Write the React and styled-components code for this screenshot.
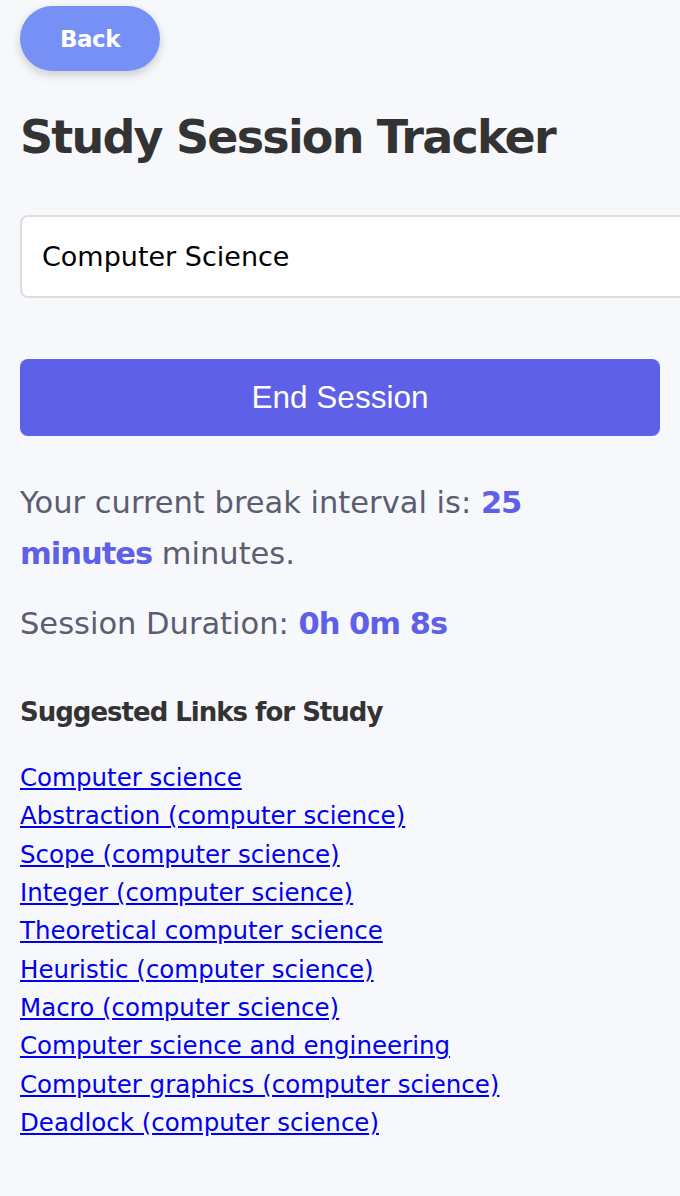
import React from "react"
import styled, { createGlobalStyle } from "styled-components"

const links = [
  "Computer science",
  "Abstraction (computer science)",
  "Scope (computer science)",
  "Integer (computer science)",
  "Theoretical computer science",
  "Heuristic (computer science)",
  "Macro (computer science)",
  "Computer science and engineering",
  "Computer graphics (computer science)",
  "Deadlock (computer science)",
]

const FONT = `"DejaVu Sans", "Open Sans", sans-serif`

const GlobalStyle = createGlobalStyle`
  html, body {
    margin: 0;
    padding: 0;
    background: #f7f8fc;
    overflow-x: hidden;
    font-family: ${FONT};
  }
`

export default function App() {
  return (
    <Page>
      <GlobalStyle />
      <BackButton>Back</BackButton>
      <Title>Study Session Tracker</Title>
      <SubjectInput defaultValue="Computer Science" />
      <EndButton>End Session</EndButton>
      <Info>
        Your current break interval is: <Strong>25 minutes</Strong> minutes.
      </Info>
      <Info $tight>
        Session Duration: <Strong>0h 0m 8s</Strong>
      </Info>
      <SectionTitle>Suggested Links for Study</SectionTitle>
      <LinkList>
        {links.map((l) => (
          <LinkItem key={l}>
            <StudyLink href="#">{l}</StudyLink>
          </LinkItem>
        ))}
      </LinkList>
    </Page>
  )
}

const Page = styled.div`
  width: 640px;
  padding: 6px 20px 40px;
  display: flex;
  flex-direction: column;
  align-items: flex-start;
`

const BackButton = styled.button`
  width: 140px;
  height: 65px;
  border: none;
  border-radius: 33px;
  background: #7790f5;
  color: #fff;
  font-family: ${FONT};
  font-weight: 700;
  font-size: 23px;
  letter-spacing: -0.5px;
  box-shadow: 0 4px 10px rgba(0, 0, 0, 0.18);
  cursor: pointer;
`

const Title = styled.h1`
  margin: 38px 0 0;
  font-size: 46px;
  line-height: 56px;
  letter-spacing: -1.8px;
  font-weight: 700;
  color: #333;
`

const SubjectInput = styled.input`
  margin-top: 50px;
  width: 700px;
  min-width: 700px;
  height: 83px;
  box-sizing: border-box;
  padding: 0 20px;
  border: 2px solid #ddd;
  border-radius: 8px;
  background: #fff;
  font-family: ${FONT};
  font-size: 27px;
  color: #000;
  outline: none;
`

const EndButton = styled.button`
  margin-top: 61px;
  width: 640px;
  height: 77px;
  border: none;
  border-radius: 8px;
  background: #5e60e7;
  color: #fff;
  font-family: "Liberation Sans", Arial, sans-serif;
  font-size: 31.5px;
  cursor: pointer;
`

const Info = styled.p`
  margin: ${(p) => (p.$tight ? "19px 0 0" : "41px 0 0")};
  font-size: 30.5px;
  line-height: 51px;
  color: #5b5d70;
`

const Strong = styled.strong`
  color: #5e60e7;
  font-weight: 700;
  letter-spacing: -1px;
`

const SectionTitle = styled.h3`
  margin: 47px 0 0;
  font-size: 26px;
  line-height: 32px;
  letter-spacing: -1px;
  font-weight: 700;
  color: #333;
`

const LinkList = styled.ul`
  list-style: none;
  margin: 31px 0 0;
  padding: 0;
`

const LinkItem = styled.li`
  font-size: 24.5px;
  line-height: 38.33px;
`

const StudyLink = styled.a`
  color: #0000ee;
  text-decoration: underline;
`
